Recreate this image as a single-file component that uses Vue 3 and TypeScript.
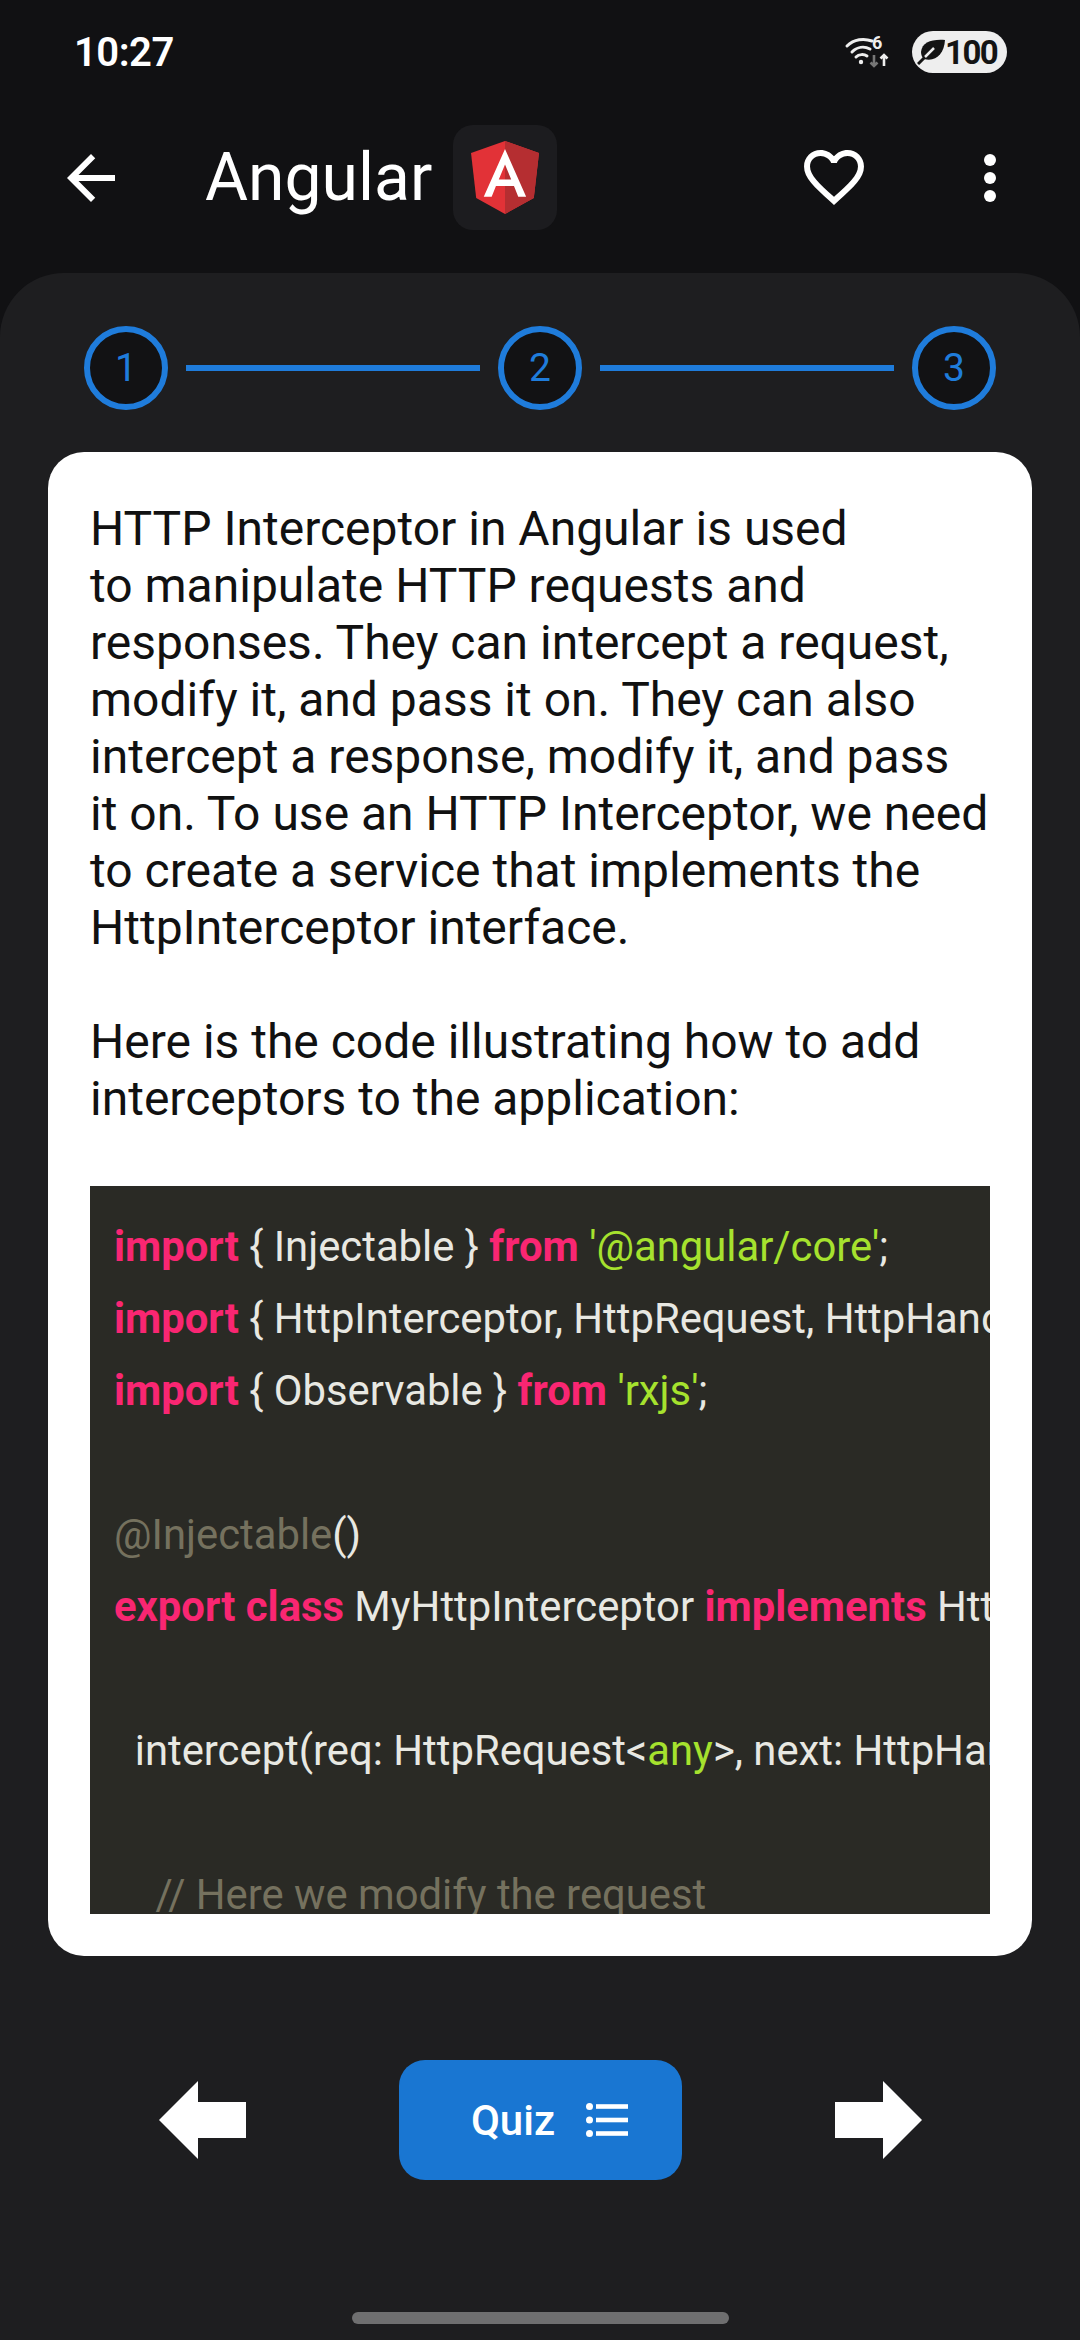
<script setup lang="ts">
type Tok = { t: string; c?: string }
const code: Tok[][] = [
  [{ t: 'import', c: 'kw' }, { t: ' { Injectable } ' }, { t: 'from', c: 'kw' }, { t: ' ' }, { t: "'@angular/core'", c: 'str' }, { t: ';' }],
  [{ t: 'import', c: 'kw' }, { t: ' { HttpInterceptor, HttpRequest, HttpHandler, HttpEvent } ' }, { t: 'from', c: 'kw' }],
  [{ t: 'import', c: 'kw' }, { t: ' { Observable } ' }, { t: 'from', c: 'kw' }, { t: ' ' }, { t: "'rxjs'", c: 'str' }, { t: ';' }],
  [],
  [{ t: '@Injectable', c: 'cm' }, { t: '()' }],
  [{ t: 'export class', c: 'kw' }, { t: ' MyHttpInterceptor ' }, { t: 'implements', c: 'kw' }, { t: ' HttpInterceptor {' }],
  [],
  [{ t: '  intercept(req: HttpRequest<' }, { t: 'any', c: 'str' }, { t: '>, next: HttpHandler): Observable<HttpEvent<any>> {' }],
  [],
  [{ t: '    // Here we modify the request', c: 'cmr' }],
]
const intro = [
  'HTTP Interceptor in Angular is used',
  'to manipulate HTTP requests and',
  'responses. They can intercept a request,',
  'modify it, and pass it on. They can also',
  'intercept a response, modify it, and pass',
  'it on. To use an HTTP Interceptor, we need',
  'to create a service that implements the',
  'HttpInterceptor interface.',
  '',
  'Here is the code illustrating how to add',
  'interceptors to the application:',
]
</script>

<template>
  <div class="screen">
    <div class="status">
      <span class="time">10:27</span>
      <div class="status-right">
        <svg class="wifi" width="40" height="32" viewBox="0 0 40 32" fill="none">
          <path d="M1 10 C8 3 18 2 26 5" stroke="#eee" stroke-width="3" stroke-linecap="round" />
          <path d="M6 16 C11 11 18 10 24 13" stroke="#eee" stroke-width="3" stroke-linecap="round" />
          <path d="M10 21 C13 18 18 18 21 20" stroke="#eee" stroke-width="3" stroke-linecap="round" />
          <circle cx="15" cy="26" r="2.2" fill="#eee" />
          <path d="M28 19 V30 M24.5 26.5 L28 30 L31.5 26.5" stroke="#777" stroke-width="2.6" />
          <path d="M38 30 V19 M34.5 22.5 L38 19 L41.5 22.5" stroke="#eee" stroke-width="2.6" />
          <text x="26" y="13" class="six">6</text>
        </svg>
        <div class="battery">
          <svg width="28" height="26" viewBox="0 0 28 26" fill="none">
            <path d="M28 1 C15 0 5 3 4 13 C4 16 5 18 7 20 C19 23 27 15 28 1 Z" fill="#141414" />
            <path d="M1 25 L15 11" stroke="#141414" stroke-width="3" />
            <path d="M8 18 L17 9" stroke="#eee" stroke-width="2.5" />
          </svg>
          <span>100</span>
        </div>
      </div>
    </div>

    <header class="topbar">
      <svg class="back" width="48" height="48" viewBox="4 4 16 16" fill="#fff">
        <path d="M20 11H7.83l5.59-5.59L12 4l-8 8 8 8 1.41-1.41L7.83 13H20v-2z" />
      </svg>
      <h1 class="title">Angular</h1>
      <div class="tile">
        <svg width="68" height="73" viewBox="31.9 30 186.2 200">
          <polygon points="125,30 31.9,63.2 46.1,186.3 125,230 203.9,186.3 218.1,63.2" fill="#e23237" />
          <polygon points="125,30 125,230 203.9,186.3 218.1,63.2" fill="#b52e31" />
          <path fill="#fff" fill-rule="evenodd" d="M125 52.1 L66.8 182.6 H88.5 L100.2 153.4 H149.6 L161.3 182.6 H183 Z M142 135.4 H108 L125 94.5 Z" />
        </svg>
      </div>
      <div class="spacer"></div>
      <svg class="heart" width="60" height="55" viewBox="2 3 20 18.35" fill="#fff">
        <path d="M16.5 3c-1.74 0-3.41.81-4.5 2.09C10.91 3.81 9.24 3 7.5 3 4.42 3 2 5.42 2 8.5c0 3.78 3.4 6.86 8.55 11.54L12 21.35l1.45-1.32C18.6 15.36 22 12.28 22 8.5 22 5.42 19.58 3 16.5 3zm-4.4 15.55l-.1.1-.1-.1C7.14 14.24 4 11.39 4 8.5 4 6.5 5.5 5 7.5 5c1.54 0 3.04.99 3.57 2.36h1.87C13.46 5.99 14.96 5 16.5 5c2 0 3.5 1.5 3.5 3.5 0 2.89-3.14 5.74-7.9 10.05z" />
      </svg>
      <div class="kebab"><i></i><i></i><i></i></div>
    </header>

    <main class="panel">
      <div class="stepper">
        <div class="step">1</div>
        <div class="line"></div>
        <div class="step">2</div>
        <div class="line"></div>
        <div class="step">3</div>
      </div>

      <section class="card">
        <div class="intro">
          <p v-for="(l, i) in intro" :key="i" class="intro-line">{{ l || '\u00a0' }}</p>
        </div>
        <div class="code">
          <div v-for="(row, i) in code" :key="i" class="code-line"><span v-for="(tok, j) in row" :key="j" :class="tok.c">{{ tok.t }}</span></div>
        </div>
      </section>

      <div class="actions">
        <svg width="87" height="78" viewBox="0 0 87 78"><polygon points="0,39 39,0 39,21 87,21 87,57 39,57 39,78" fill="#fff" /></svg>
        <button class="quiz">
          <span>Quiz</span>
          <svg width="42" height="34" viewBox="0 0 42 34" fill="#fff">
            <circle cx="3.5" cy="3.5" r="3.5" /><circle cx="3.5" cy="17" r="3.5" /><circle cx="3.5" cy="30.5" r="3.5" />
            <rect x="10" y="1.2" width="32" height="4.6" /><rect x="10" y="14.7" width="32" height="4.6" /><rect x="10" y="28.2" width="32" height="4.6" />
          </svg>
        </button>
        <svg width="87" height="78" viewBox="0 0 87 78"><polygon points="87,39 48,0 48,21 0,21 0,57 48,57 48,78" fill="#fff" /></svg>
      </div>

      <div class="handle"></div>
    </main>
  </div>
</template>

<style>
html, body { margin: 0; background: #111113; }
</style>

<style scoped>
.screen {
  width: 1080px;
  height: 2340px;
  background: #111113;
  font-family: Roboto, "Liberation Sans", sans-serif;
  display: flex;
  flex-direction: column;
  overflow: hidden;
}
.status {
  height: 104px;
  display: flex;
  align-items: center;
  justify-content: space-between;
  padding: 0 73px 0 74px;
  box-sizing: border-box;
}
.time { color: #fff; font-size: 40px; font-weight: 600; letter-spacing: -0.5px; }
.status-right { display: flex; align-items: center; gap: 26px; }
.wifi { overflow: visible; }
.six { font: 700 18px Roboto, sans-serif; fill: #eee; }
.battery {
  width: 95px;
  height: 42px;
  border-radius: 21px;
  background: #eee;
  color: #141414;
  display: flex;
  align-items: center;
  box-sizing: border-box;
  padding-left: 5px;
  font-size: 33px;
  font-weight: 700;
  letter-spacing: -1.5px;
}
.topbar {
  height: 105px;
  margin-top: 21px;
  display: flex;
  align-items: center;
  padding-left: 67px;
  box-sizing: border-box;
}
.title {
  margin: 0 0 0 90px;
  font-size: 66px;
  font-weight: 400;
  color: #fff;
}
.tile {
  width: 104px;
  height: 105px;
  margin-left: 21px;
  border-radius: 20px;
  background: #1c1c1f;
  display: flex;
  align-items: center;
  justify-content: center;
}
.spacer { flex: 1; }
.heart { margin-right: 120px; }
.kebab { display: flex; flex-direction: column; gap: 6px; margin-right: 84px; }
.kebab i { width: 12px; height: 12px; border-radius: 50%; background: #fff; display: block; }
.panel {
  flex: 1;
  margin-top: 43px;
  background: #1e1e20;
  border-radius: 64px 64px 0 0;
  display: flex;
  flex-direction: column;
  align-items: center;
}
.stepper {
  margin-top: 53px;
  display: flex;
  align-items: center;
  gap: 18px;
}
.step {
  width: 84px;
  height: 84px;
  box-sizing: border-box;
  border: 6px solid #1f7cdb;
  border-radius: 50%;
  background: #121214;
  color: #1f7cdb;
  font-size: 39px;
  display: flex;
  align-items: center;
  justify-content: center;
}
.line { width: 294px; height: 6px; background: #1f7cdb; }
.card {
  width: 984px;
  height: 1504px;
  margin-top: 42px;
  box-sizing: border-box;
  padding: 48px 42px 0;
  background: #fff;
  border-radius: 36px;
  overflow: hidden;
}
.intro-line {
  margin: 0;
  height: 57px;
  line-height: 57px;
  font-size: 48px;
  color: #111;
  white-space: nowrap;
}
.code {
  margin-top: 59px;
  height: 728px;
  box-sizing: border-box;
  padding: 25px 24px 0;
  background: #2a2a25;
  overflow: hidden;
}
.code-line {
  height: 72px;
  line-height: 72px;
  font-size: 41.8px;
  color: #e8e8e2;
  white-space: pre;
}
.kw { color: #f92672; font-weight: 700; }
.str { color: #a6e22e; }
.cm, .cmr { color: #75715e; }
.actions {
  margin-top: 104px;
  display: flex;
  align-items: center;
  gap: 153px;
}
.quiz {
  width: 283px;
  height: 120px;
  border: 0;
  border-radius: 26px;
  background: #1976d2;
  color: #fff;
  font: 500 42px Roboto, sans-serif;
  display: flex;
  align-items: center;
  justify-content: center;
  gap: 31px;
  padding: 0 0 0 19px;
}
.handle {
  width: 377px;
  height: 12px;
  margin-top: 132px;
  border-radius: 6px;
  background: #6f6f70;
}
</style>
